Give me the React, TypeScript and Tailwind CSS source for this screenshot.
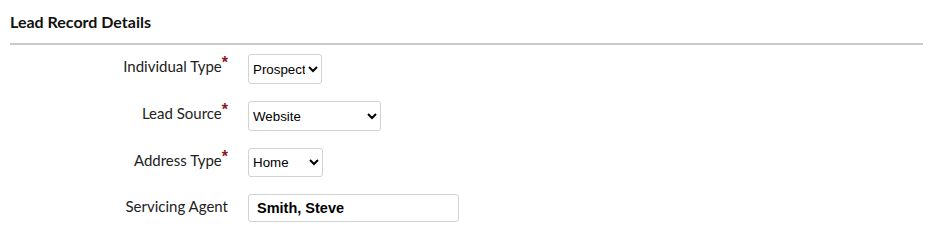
import React from "react";

const labelFont = { fontFamily: 'Lato, "Noto Sans", sans-serif' };

function Label({ text, required }: { text: string; required?: boolean }) {
  return (
    <div className="w-[228px] shrink-0 text-right text-[15px] text-[#222] leading-none relative -top-[2px]" style={labelFont}>
      {text}
      {required ? (
        <span
          className="text-[#8b1a1a] text-[16px] font-bold relative -top-[4px]"
          style={{ fontFamily: '"Liberation Sans", Arial, sans-serif' }}
        >
          *
        </span>
      ) : null}
    </div>
  );
}

export default function App() {
  return (
    <div className="w-[928px] h-[234px] bg-white" style={{ fontFamily: '"Liberation Sans", Arial, sans-serif' }}>
      <div className="pl-[10px] pr-[5px] pt-[12px]">
        <h2 className="text-[16px] font-bold text-[#111] leading-[20px]" style={labelFont}>Lead Record Details</h2>
        <div className="mt-[11px] h-[2px] bg-[#c8cacd]" />
      </div>
      <div className="flex flex-col pt-[9px] gap-[17px]">
        <div className="flex items-center gap-[20px] h-[30px]">
          <Label text="Individual Type" required />
          <select className="w-[74px] h-[30px] border border-[#cfd2d6] rounded-[3px] text-[13.33px] text-black px-0 bg-white" defaultValue="Prospect">
            <option>Prospect</option>
          </select>
        </div>
        <div className="flex items-center gap-[20px] h-[30px]">
          <Label text="Lead Source" required />
          <select className="w-[133px] h-[30px] border border-[#cfd2d6] rounded-[3px] text-[13.33px] text-black px-0 bg-white" defaultValue="Website">
            <option>Website</option>
          </select>
        </div>
        <div className="flex items-center gap-[20px] h-[29px]">
          <Label text="Address Type" required />
          <select className="w-[75px] h-[29px] border border-[#cfd2d6] rounded-[3px] text-[13.33px] text-black px-0 bg-white" defaultValue="Home">
            <option>Home</option>
          </select>
        </div>
        <div className="flex items-center gap-[20px] h-[28px]">
          <Label text="Servicing Agent" />
          <input
            readOnly
            value="Smith, Steve"
            className="w-[211px] h-[28px] border border-[#cfd2d6] rounded-[3px] text-[14.5px] font-bold text-black px-[8px] bg-white"
          />
        </div>
      </div>
    </div>
  );
}
